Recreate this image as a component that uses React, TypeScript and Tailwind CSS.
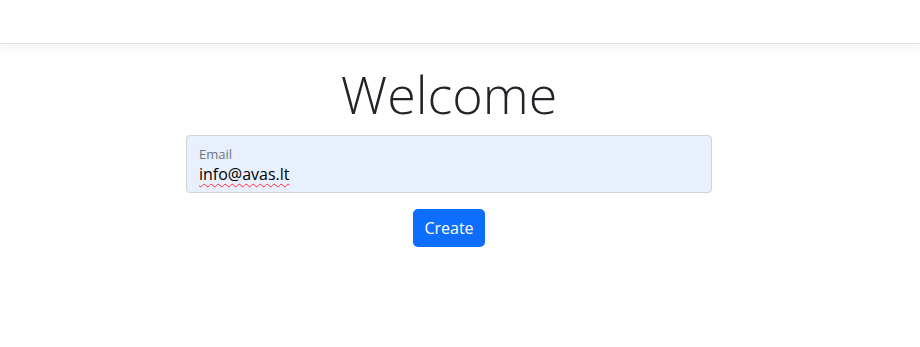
export default function App() {
  return (
    <div className="min-h-[347px] bg-white font-['Open_Sans',sans-serif] text-[#212529]">
      {/* navbar placeholder */}
      <header className="h-[44px] border-b border-[#dee2e6] bg-white shadow-[0_4px_12px_rgba(0,0,0,0.05)]" />

      <main className="flex flex-col items-center pr-[22px]">
        <h1 className="mt-[18px] text-[52px] font-light leading-[64px]">Welcome</h1>

        <div className="mt-[9px] h-[58px] w-[526px] rounded-[4px] border border-[#ced4da] bg-[#e8f0fe] px-[12px] pt-[9px]">
          <div className="text-[13px] leading-[18px] text-[#6c757d]">Email</div>
          <div className="text-[16px] leading-[22px] text-black underline decoration-wavy decoration-red-500 decoration-1 underline-offset-[3px]">
            info@avas.lt
          </div>
        </div>

        <button className="mt-[16px] h-[38px] rounded-[5px] bg-[#0d6efd] px-[11px] text-[16px] text-white">
          Create
        </button>
      </main>
    </div>
  );
}
